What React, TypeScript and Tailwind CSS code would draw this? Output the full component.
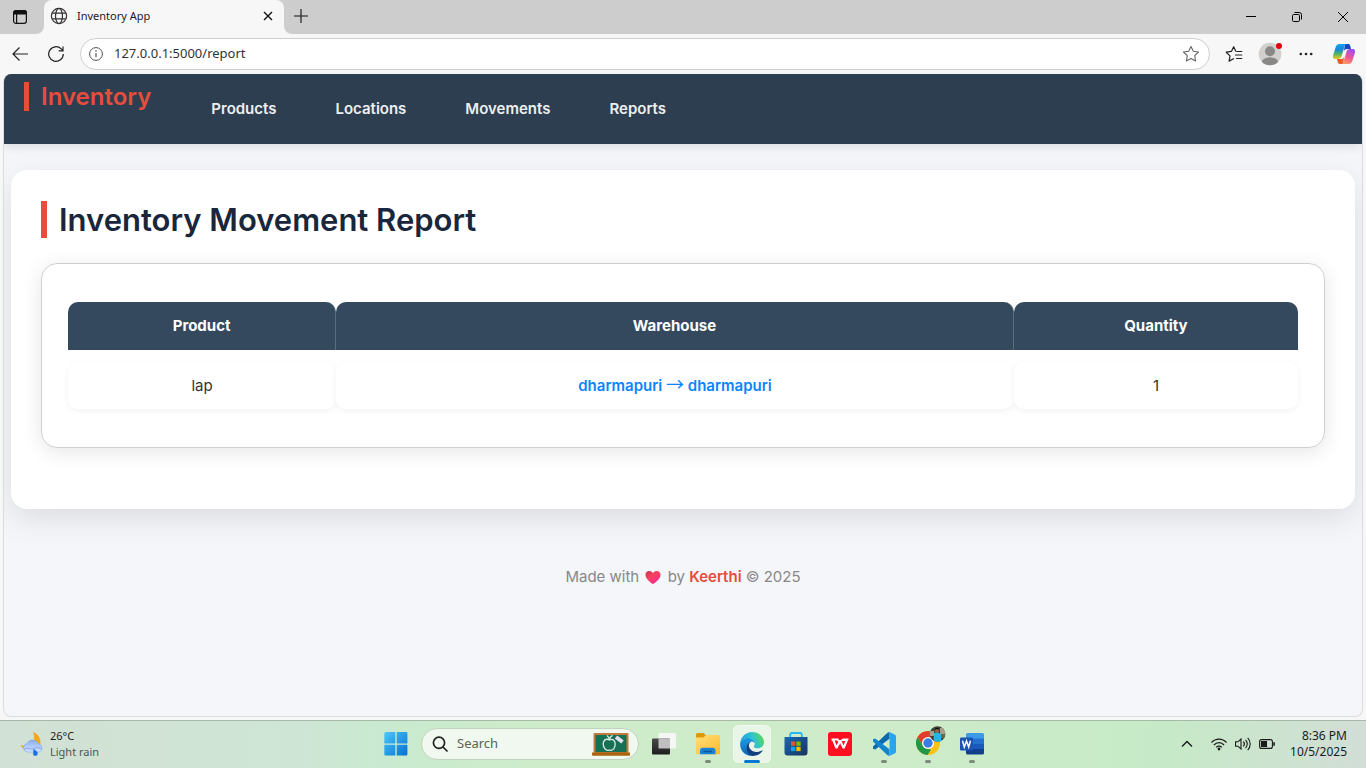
import type { ReactNode } from "react";

const navItems = ["Products", "Locations", "Movements", "Reports"];

const rows = [{ product: "lap", from: "dharmapuri", to: "dharmapuri", quantity: 1 }];

function TabActionsIcon() {
  return (
    <svg width="16" height="16" viewBox="0 0 16 16" fill="none" stroke="#111" strokeWidth="1.2">
      <rect x="1.6" y="1.6" width="12.8" height="12.8" rx="2.4" />
      <path d="M1.8 4.9V3.6a2 2 0 0 1 2-2h8.400a2 2 0 0 1 2 2v1.300z" fill="#111" />
      <path d="M4.600 5v9" />
    </svg>
  );
}

function GlobeIcon() {
  return (
    <svg width="18" height="18" viewBox="0 0 18 18" fill="none" stroke="#333" strokeWidth="1.2">
      <circle cx="9" cy="9" r="7.600" />
      <ellipse cx="9" cy="9" rx="3.500" ry="7.600" />
      <path d="M2.200 6.200h13.600M2.200 11.800h13.600" />
    </svg>
  );
}

function StarIcon({ lines = false }: { lines?: boolean }) {
  return lines ? (
    <svg width="18" height="18" viewBox="0 0 18 18" fill="none" stroke="#222" strokeWidth="1.200" strokeLinejoin="round" strokeLinecap="round">
      <path d="M10.800 6.200 8.700 1.700 6.400 6.400l-5.200.8 3.800 3.700-.9 5.200 4.400-2.400M12 6.500h4.800M10.500 10h6.300M11.500 13.500h5.300" />
    </svg>
  ) : (
    <svg width="18" height="18" viewBox="0 0 18 18" fill="none" stroke="#666" strokeWidth="1.100" strokeLinejoin="round">
      <path d="m9 1.500 2.300 4.800 5.200.7-3.800 3.700.9 5.300L9 13.500 4.400 16l.9-5.300L1.500 7l5.200-.7z" />
    </svg>
  );
}

function CopilotIcon() {
  return (
    <svg width="24" height="22" viewBox="0 0 24 22">
      <defs>
        <linearGradient id="cp-left" x1="0" y1="0" x2="0" y2="1">
          <stop offset="0" stopColor="#16a5e8" />
          <stop offset=".35" stopColor="#1587e4" />
          <stop offset=".65" stopColor="#4db36a" />
          <stop offset="1" stopColor="#f3cb13" />
        </linearGradient>
        <linearGradient id="cp-right" x1=".7" y1="0" x2=".2" y2="1">
          <stop offset="0" stopColor="#9b4df2" />
          <stop offset=".5" stopColor="#ee5797" />
          <stop offset="1" stopColor="#ffa35a" />
        </linearGradient>
      </defs>
      <path d="M13 1h3.200c1 0 1.700.7 2 1.700L19 6h-4c-2 0-2.700 1-3.200 2.600z" fill="#1846bd" />
      <path d="M11 21H7.800c-1 0-1.700-.7-2-1.700L5 16h4c2 0 2.700-1 3.200-2.600z" fill="#ef5a2b" />
      <path d="M7.500 1H15c-1.500 0-2 1-2.400 2.300L9.600 13c-.6 2-1.600 3-3.600 3H3.500C1 16 .6 14 1.200 12l2.500-8C4.400 2 5.500 1 7.500 1z" fill="url(#cp-left)" />
      <path d="M16.500 21H9c1.500 0 2-1 2.400-2.300L14.400 9c.6-2 1.600-3 3.600-3h2.500c2.500 0 2.900 2 2.300 4l-2.500 8c-.7 2-1.800 3-3.800 3z" fill="url(#cp-right)" />
    </svg>
  );
}

function BrowserTabs() {
  return (
    <div className="flex h-[34px] bg-[#f7f7f7]">
      <div className="flex w-11 items-center rounded-br-lg bg-[#cdcdcd] pl-3">
        <button aria-label="Tab actions">
          <TabActionsIcon />
        </button>
      </div>
      <div className="w-60 bg-[#cdcdcd]">
        <div className="flex h-8 items-center rounded-t-lg bg-[#f7f7f7] pr-2 pl-1.5">
          <GlobeIcon />
          <span className="ml-[9px] flex-1 text-[11px] text-[#1b1b1b]">Inventory App</span>
          <button aria-label="Close tab" className="grid size-4 place-items-center">
            <svg width="10" height="10" viewBox="0 0 10 10" stroke="#111" strokeWidth="1.400">
              <path d="m1 1 8 8M9 1 1 9" />
            </svg>
          </button>
        </div>
        <div className="h-0.5 bg-[#f7f7f7]" />
      </div>
      <div className="flex flex-1 items-start justify-between rounded-bl-lg bg-[#cdcdcd]">
        <button aria-label="New tab" className="grid h-8 w-[34px] place-items-center">
          <svg width="14" height="14" viewBox="0 0 14 14" stroke="#111" strokeWidth="1.100">
            <path d="M7 0v14M0 7h14" />
          </svg>
        </button>
        <div className="flex">
          <button aria-label="Minimize" className="grid h-[34px] w-[46px] place-items-center">
            <svg width="10" height="10" viewBox="0 0 10 10" stroke="#000">
              <path d="M0 4.500h10" />
            </svg>
          </button>
          <button aria-label="Restore" className="grid h-[34px] w-[46px] place-items-center">
            <svg width="10" height="10" viewBox="0 0 10 10" fill="none" stroke="#000">
              <rect x=".5" y="2.500" width="7" height="7" rx="1.200" />
              <path d="M2.500.5h4.700a2.300 2.300 0 0 1 2.300 2.300v4.700" />
            </svg>
          </button>
          <button aria-label="Close" className="grid h-[34px] w-[46px] place-items-center">
            <svg width="10" height="10" viewBox="0 0 10 10" stroke="#000">
              <path d="m0 0 10 10M10 0 0 10" />
            </svg>
          </button>
        </div>
      </div>
    </div>
  );
}

function Toolbar() {
  const slot = "grid h-8 w-9 place-items-center";
  return (
    <div className="flex h-10 items-center bg-[#f7f7f7] px-0.5">
      <button aria-label="Back" className={slot}>
        <svg width="16" height="14" viewBox="0 0 16 14" fill="none" stroke="#222" strokeWidth="1.200">
          <path d="M16 7H1M7.500.500 1 7l6.500 6.500" />
        </svg>
      </button>
      <button aria-label="Refresh" className={slot}>
        <svg width="16" height="16" viewBox="0 0 16 16" fill="none" stroke="#222" strokeWidth="1.200">
          <path d="M15.300 8A7.300 7.300 0 1 1 13.200 2.900L15 4.700M15 .5v4.300h-4.300" />
        </svg>
      </button>
      <div className="mr-1.5 ml-1.5 flex h-8 flex-1 items-center rounded-full border border-[#cfcfcf] bg-white px-2">
        <svg width="14" height="14" viewBox="0 0 14 14" fill="none" stroke="#555">
          <circle cx="7" cy="7" r="6.400" />
          <path d="M7 6v4.300" strokeWidth="1.200" />
          <circle cx="7" cy="4" r=".8" fill="#555" stroke="none" />
        </svg>
        <input
          aria-label="Address"
          defaultValue="127.0.0.1:5000/report"
          className="ml-[11px] min-w-0 flex-1 bg-transparent text-[13px] text-[#333] outline-none"
        />
        <button aria-label="Add to favorites" className="mr-px">
          <StarIcon />
        </button>
      </div>
      <button aria-label="Favorites" className={slot}>
        <StarIcon lines />
      </button>
      <button aria-label="Profile" className={slot}>
        <svg width="26" height="26" viewBox="0 0 26 26" className="overflow-visible">
          <defs>
            <clipPath id="avatar">
              <circle cx="13" cy="13" r="11.300" />
            </clipPath>
          </defs>
          <circle cx="13" cy="13" r="11.300" fill="#d2d0ce" />
          <g clipPath="url(#avatar)" fill="#8a8886">
            <circle cx="13" cy="10.200" r="5" />
            <ellipse cx="13" cy="21.800" rx="8.300" ry="5.600" />
          </g>
          <circle cx="22" cy="5" r="3" fill="#e3000f" />
        </svg>
      </button>
      <button aria-label="Settings and more" className={slot}>
        <svg width="14" height="4" viewBox="0 0 14 4" fill="#222">
          <circle cx="1.800" cy="2" r="1.300" />
          <circle cx="7" cy="2" r="1.300" />
          <circle cx="12.200" cy="2" r="1.300" />
        </svg>
      </button>
      <button aria-label="Copilot" className="grid h-8 w-10 place-items-center">
        <CopilotIcon />
      </button>
    </div>
  );
}

function HeartIcon() {
  return (
    <svg role="img" aria-label="love" width="16" height="16" viewBox="0 0 16 16" className="mx-0.5 inline-block">
      <defs>
        <linearGradient id="heart" x1="0" y1="0" x2=".7" y2="1">
          <stop offset="0" stopColor="#c52b55" />
          <stop offset=".4" stopColor="#f5425a" />
          <stop offset="1" stopColor="#ff2a96" />
        </linearGradient>
      </defs>
      <path d="M8 14.300C5 12 .5 9 .5 4.800.5 2.500 2.200 1 4.200 1 5.900 1 7.200 1.800 8 3.200 8.800 1.800 10.100 1 11.800 1c2 0 3.700 1.500 3.700 3.800 0 4.200-4.500 7.200-7.500 9.500z" fill="url(#heart)" />
    </svg>
  );
}

function ReportPage() {
  return (
    <main className="mx-[3px] mb-[3px] flex-1 overflow-hidden rounded-lg border border-t-0 border-[#dcdcdc] bg-[#f4f6fa] font-['Inter',sans-serif]">
      <header className="relative flex h-[70px] items-start bg-[#2c3e50] px-5 pt-2 shadow-[0_2px_10px_rgba(0,0,0,0.12)]">
        <a href="#home" className="border-l-[5px] border-[#e74c3c] pl-3 text-2xl leading-[29px] font-semibold text-[#e74c3c]">
          Inventory
        </a>
        <nav className="ml-[60px] flex h-[54px] gap-[59px]">
          {navItems.map((item) => (
            <a key={item} href={`#${item.toLowerCase()}`} className="pt-[18px] text-[15px] leading-[18px] font-semibold text-[#ecf0f1]">
              {item}
            </a>
          ))}
        </nav>
      </header>

      <section className="mx-[7px] mt-[26px] rounded-2xl bg-white px-[30px] pt-[31px] pb-[61px] shadow-[0_10px_30px_rgba(0,0,0,0.1)]">
        <h1 className="border-l-[6px] border-[#e74c3c] pl-3 text-[31px] leading-[37px] font-semibold text-[#1a263b]">
          Inventory Movement Report
        </h1>
        <div className="mt-[25px] rounded-2xl border border-[#cfcfcf] px-[26px] py-[38px] shadow-[0_4px_20px_rgba(0,0,0,0.1)]">
          <table className="w-full table-fixed border-separate border-spacing-0 text-center text-[15px] leading-6">
            <colgroup>
              <col className="w-[21.8%]" />
              <col className="w-[55.1%]" />
              <col className="w-[23.1%]" />
            </colgroup>
            <thead className="text-white">
              <tr>
                <th scope="col" className="h-12 rounded-t-[10px] border-r border-[#5a6c7d] bg-[#34495e] font-bold">Product</th>
                <th scope="col" className="h-12 rounded-t-[10px] border-r border-[#5a6c7d] bg-[#34495e] font-bold">Warehouse</th>
                <th scope="col" className="h-12 rounded-t-[10px] bg-[#34495e] font-bold">Quantity</th>
              </tr>
            </thead>
            <tbody className="before:block before:h-3 before:content-['']">
              {rows.map((row) => (
                <tr key={row.product} className="text-[#333]">
                  <td className="h-[47px] rounded-[10px] bg-white shadow-[0_2px_6px_rgba(0,0,0,0.05)]">{row.product}</td>
                  <td className="h-[47px] rounded-[10px] bg-white font-semibold text-[#0a84ff] shadow-[0_2px_6px_rgba(0,0,0,0.05)]">
                    {row.from} <span className="font-['Noto_Sans_CJK_SC',sans-serif] text-lg leading-none font-normal">→</span> {row.to}
                  </td>
                  <td className="h-[47px] rounded-[10px] bg-white shadow-[0_2px_6px_rgba(0,0,0,0.05)]">{row.quantity}</td>
                </tr>
              ))}
            </tbody>
          </table>
        </div>
      </section>

      <footer className="mt-14 text-center text-[15px] leading-6 text-[#888]">
        Made with <HeartIcon /> by <span className="font-semibold text-[#e74c3c]">Keerthi</span> © 2025
      </footer>
    </main>
  );
}

function WeatherIcon() {
  return (
    <svg width="24" height="26" viewBox="0 0 24 26">
      <defs>
        <linearGradient id="cloud" x1="0" y1="0" x2="0" y2="1">
          <stop offset="0" stopColor="#86aef3" />
          <stop offset="1" stopColor="#d7e3fb" />
        </linearGradient>
      </defs>
      <path d="M13 1c5 1.500 8 6.500 7.500 12H13c1.500-4 1.500-8 0-12zM.500 14c3 1 6 .8 8-.5L4.500 18C2.800 17.300 1.300 16 .500 14z" fill="#f4a623" />
      <path d="M7.500 21a4.300 4.300 0 0 1-.5-8.500 6.300 6.300 0 0 1 11.500.300 4.200 4.200 0 0 1 .500 8.200z" fill="url(#cloud)" stroke="#7fa5e8" strokeWidth=".6" />
      <path d="M4 18.500c3-2.500 7 .5 10-1 3-1.500 6-.5 8 .5" fill="none" stroke="#84a8ec" />
      <path d="M13.500 18c2.500 1.500 5 3 4 5.500-.8 1.800-3.800 1.700-4.300-.300z" fill="#1670ed" />
    </svg>
  );
}

function ChalkboardIcon() {
  return (
    <svg width="38" height="24" viewBox="0 0 38 24">
      <rect x="1.500" y="1" width="35" height="20" rx="1" fill="#c17a3c" />
      <rect x="3.500" y="3" width="31" height="17" fill="#177055" />
      <path d="M0 20.500h38v2.200a1 1 0 0 1-1 1H1a1 1 0 0 1-1-1z" fill="#a9640d" />
      <path d="M17.500 8c-3.500-2-6.500.3-6.300 4.200.2 3.500 2.600 6.300 4.600 6.100 1-.3 2-.3 3.200 0 2.500 0 4.300-3.300 4.200-6.500-.3-4-3-5.300-5.700-3.800zc-.2-2-1-3.300-2.500-4.500M18 6.800c0-2 1-3 2.700-3.200" fill="none" stroke="#dcebe2" strokeWidth="1.300" />
      <path d="m24 5 6.500 5" stroke="#e5dff0" strokeWidth="4" />
    </svg>
  );
}

function StartIcon() {
  return (
    <svg width="24" height="24" viewBox="0 0 24 24">
      <defs>
        <linearGradient id="start" gradientUnits="userSpaceOnUse" x1="0" y1="0" x2="24" y2="24">
          <stop stopColor="#4cc9fa" />
          <stop offset="1" stopColor="#036ed0" />
        </linearGradient>
      </defs>
      <path d="M1.500 0H11.300v11.500H.300V1.200zM12.700 0h9.500a1.200 1.200 0 0 1 1.200 1.200v10.300H12.700zM.300 12.700h11V23.500H1.500a1.200 1.200 0 0 1-1.200-1.200zM12.700 12.700h10.700v9.600a1.200 1.200 0 0 1-1.200 1.200h-9.500z" fill="url(#start)" />
    </svg>
  );
}

function TaskViewIcon() {
  return (
    <svg width="24" height="24" viewBox="0 0 24 24">
      <defs>
        <linearGradient id="tv-dark" x1="0" y1="0" x2="0" y2="1">
          <stop stopColor="#4a4a4a" />
          <stop offset="1" stopColor="#1d1d1d" />
        </linearGradient>
      </defs>
      <rect x="6.500" y="1" width="17.500" height="15.500" rx="1" fill="#f6f6f6" />
      <rect x="0" y="6.500" width="18" height="16" rx="1" fill="url(#tv-dark)" />
      <path d="M6.500 6.500H18v10H6.500z" fill="#bfbfbf" />
    </svg>
  );
}

function ExplorerIcon() {
  return (
    <svg width="24" height="24" viewBox="0 0 24 24">
      <defs>
        <linearGradient id="folder" x1="0" y1="0" x2="1" y2="1">
          <stop stopColor="#ffe07a" />
          <stop offset="1" stopColor="#fcb92b" />
        </linearGradient>
      </defs>
      <path d="M0 2.500A1.500 1.500 0 0 1 1.500 1h6.300L10 3.500h12A1.500 1.500 0 0 1 23.500 5v5H0z" fill="#dd9a0d" />
      <path d="M0 5.500h7.500L10 3h12.500A1.500 1.500 0 0 1 24 4.500v16.300a1.500 1.500 0 0 1-1.500 1.500h-21A1.500 1.500 0 0 1 0 20.800z" fill="url(#folder)" />
      <path d="M4 22.300v-3.500A3 3 0 0 1 7 15.800h9.500a3 3 0 0 1 3 3v3.500z" fill="#1783d5" />
      <path d="M7.500 19.500h8.500" stroke="#0a559f" strokeWidth="1.500" />
    </svg>
  );
}

function EdgeIcon() {
  return (
    <svg width="24" height="24" viewBox="0 0 24 24">
      <defs>
        <linearGradient id="edge-top" x1="0" y1=".6" x2="1" y2=".3">
          <stop stopColor="#1b9de2" />
          <stop offset=".55" stopColor="#2cc3d2" />
          <stop offset="1" stopColor="#5fd951" />
        </linearGradient>
        <linearGradient id="edge-left" x1="0" y1="0" x2="0" y2="1">
          <stop stopColor="#1b9de2" />
          <stop offset="1" stopColor="#1161b5" />
        </linearGradient>
      </defs>
      <path d="M.2 11C.8 5 5.600 0 12 0c7 0 12 5 12 10.200 0 3.800-3 6-6 6-2.500 0-4.200-.8-4.200-1.800 0-.6 1-1.100 1-2.900C14.800 8.300 11.500 6 8 6 4 6 1 8.300.2 11z" fill="url(#edge-top)" />
      <path d="M.1 12C.3 8.300 3.500 6 8 6c3.800 0 6.700 2.500 6.800 5.200-1-1.200-2.200-1.700-3.300-1.700-2.800 1-4 3.600-4 6.200 0 4 3 7 6.500 8C6 24.900 0 19 .1 12z" fill="url(#edge-left)" />
      <path d="M11.500 9.500c-2 .8-2.800 2.500-2.600 4.500.4 3.500 4.300 6.300 8.300 5.900 2.200-.2 3.700-1 4.700-1.500.6-.3.900.1.600.7A12 12 0 0 1 13 24c-4-.8-6.700-4.500-6.300-8.500.2-3 2-5.500 4.800-6z" fill="#123f7d" />
    </svg>
  );
}

function StoreIcon() {
  return (
    <svg width="24" height="24" viewBox="0 0 24 24">
      <defs>
        <linearGradient id="store" x1="0" y1="0" x2="1" y2="1">
          <stop stopColor="#1769b5" />
          <stop offset="1" stopColor="#18325d" />
        </linearGradient>
      </defs>
      <path d="M6.200 7V2.500a1.500 1.500 0 0 1 1.500-1.500h8.600a1.500 1.500 0 0 1 1.500 1.500V7" fill="none" stroke="#28b6ee" strokeWidth="1.800" />
      <path d="M.5 5h23v15.500a3 3 0 0 1-3 3h-17a3 3 0 0 1-3-3z" fill="url(#store)" />
      <path d="M7 9.500h4.300v4.300H7z" fill="#f25022" />
      <path d="M12.300 9.500h4.300v4.300h-4.300z" fill="#7fba00" />
      <path d="M7 14.800h4.300v4.300H7z" fill="#00a4ef" />
      <path d="M12.300 14.800h4.300v4.300h-4.300z" fill="#ffb900" />
    </svg>
  );
}

function WpsIcon() {
  return (
    <svg width="24" height="24" viewBox="0 0 24 24">
      <rect width="24" height="24" rx="3" fill="#fc0f20" />
      <path d="M3.500 7.500h7M5 7.500 8.500 16l3.600-7.500L15.600 16 19 8h-5.500" fill="none" stroke="#fff" strokeWidth="2.100" strokeLinejoin="bevel" />
      <path d="m9.500 7 2.500 5.500M14.500 7.200h6" stroke="#fff" strokeWidth="1.400" />
    </svg>
  );
}

function VsCodeIcon() {
  return (
    <svg width="24" height="24" viewBox="0 0 24 24">
      <path d="M17.500 0v6.700L3.200 17.500l-2.200-.8v-2.200L15.500.8z" fill="#0b69ae" />
      <path d="M17.500 24v-6.700L3.200 6.500 1 7.300v2.200l14.500 13.700z" fill="#1184cc" />
      <path d="m17.500 0 5.500 2.700a1.800 1.800 0 0 1 1 1.500v15.600a1.800 1.800 0 0 1-1 1.500L17.500 24z" fill="#29a5ef" />
    </svg>
  );
}

function ChromeIcon() {
  return (
    <svg width="30" height="30" viewBox="0 0 30 30">
      <defs>
        <clipPath id="chrome-avatar">
          <circle cx="21.500" cy="8" r="7.800" />
        </clipPath>
      </defs>
      <circle cx="12" cy="17" r="12" fill="#fbc116" />
      <path d="M1.600 11A12 12 0 0 1 22.400 11H12l-4.800 9z" fill="#e33b2e" />
      <path d="M1.600 11l5.600 9.200L12 23l3 .500L11.600 29A12 12 0 0 1 1.600 11z" fill="#22974a" />
      <circle cx="12" cy="17" r="6" fill="#fff" />
      <circle cx="12" cy="17" r="4.700" fill="#3b7de8" />
      <g clipPath="url(#chrome-avatar)">
        <path d="M13 0h17v16H13z" fill="#453f39" />
        <path d="M13 5h5v5h-5zM24 2h6v6h-6z" fill="#a5a18d" />
        <path d="M24 8h6v4h-6z" fill="#5e7045" />
        <path d="m18 7 3-1 4 2 .500 8h-8z" fill="#25b4e5" />
        <circle cx="21" cy="4.500" r="2.300" fill="#9a6248" />
        <path d="M18.700 4c0-3 4.600-3 4.600 0l-2-1z" fill="#111" />
      </g>
    </svg>
  );
}

function WordIcon() {
  return (
    <svg width="24" height="24" viewBox="0 0 24 24">
      <path d="M7.500 1h15A1.500 1.500 0 0 1 24 2.500V7H6V2.500A1.500 1.500 0 0 1 7.500 1z" fill="#3d9ae8" />
      <path d="M6 6.500h18V12H6z" fill="#2472ce" />
      <path d="M6 12h18v5.500H6z" fill="#185abd" />
      <path d="M6 17h18v4a1.500 1.500 0 0 1-1.500 1.500h-15A1.500 1.500 0 0 1 6 21z" fill="#123f8c" />
      <rect x="0" y="5.500" width="13" height="13" rx="1.200" fill="#1b54b5" />
      <path d="m2.500 8.800 1.800 6.200 2.200-6 2.200 6 1.800-6.200" fill="none" stroke="#fff" strokeWidth="1.500" />
    </svg>
  );
}

function TaskButton({ label, running = false, active = false, children }: { label: string; running?: boolean; active?: boolean; children: ReactNode }) {
  return (
    <button aria-label={label} className="relative grid h-12 w-11 place-items-center">
      {active && <span className="absolute inset-x-[3px] top-[5px] bottom-[5px] rounded-md border border-white/40 bg-white/55" />}
      <span className="relative">{children}</span>
      {active && <span className="absolute bottom-[5px] left-3.5 h-[3px] w-4 rounded-full bg-[#0078d4]" />}
      {running && <span className="absolute bottom-[5px] left-[19px] h-[3px] w-1.5 rounded-full bg-[#7c8b7a]" />}
    </button>
  );
}

function Taskbar() {
  return (
    <div className="grid h-12 grid-cols-[1fr_auto_1fr] items-center bg-[linear-gradient(90deg,#d2e1d5_0%,#cee5d5_22%,#c9ead0_28%,#ceecc9_40%,#ceecc9_65%,#c6eac7_85%,#d2ded6_100%)] text-xs text-[#1b1b1b] shadow-[inset_0_1px_0_#a8b9aa]">
      <button className="flex items-center gap-1.5 pl-5 text-left">
        <WeatherIcon />
        <span className="text-[11px] leading-4">
          <span className="block">26°C</span>
          <span className="block text-[#4c574f]">Light rain</span>
        </span>
      </button>
      <div className="flex items-center pl-0.5">
        <TaskButton label="Start"><StartIcon /></TaskButton>
        <label className="mx-[3px] flex h-8 w-[218px] items-center rounded-full border border-[#bfd3bf] bg-[#f0f8f0] pr-2 pl-2.5">
          <svg width="16" height="16" viewBox="0 0 16 16" fill="none" stroke="#222" strokeWidth="1.700" strokeLinecap="round">
            <circle cx="7" cy="6.800" r="5.600" />
            <path d="m11 11 4 4" />
          </svg>
          <input aria-label="Search" placeholder="Search" className="ml-[9px] min-w-0 flex-1 bg-transparent text-[13px] outline-none placeholder:text-[#5a5f5a]" />
          <ChalkboardIcon />
        </label>
        <TaskButton label="Task view"><TaskViewIcon /></TaskButton>
        <TaskButton label="File Explorer" running><ExplorerIcon /></TaskButton>
        <TaskButton label="Microsoft Edge" active><EdgeIcon /></TaskButton>
        <TaskButton label="Microsoft Store"><StoreIcon /></TaskButton>
        <TaskButton label="WPS Office"><WpsIcon /></TaskButton>
        <TaskButton label="Visual Studio Code" running><VsCodeIcon /></TaskButton>
        <TaskButton label="Google Chrome" running>
          <span className="flex size-6 items-end">
            <span className="w-[30px] shrink-0"><ChromeIcon /></span>
          </span>
        </TaskButton>
        <TaskButton label="Word" running><WordIcon /></TaskButton>
      </div>
      <div className="flex items-center justify-end pr-[19px]">
        <button aria-label="Show hidden icons" className="mr-[18px]">
          <svg width="12" height="8" viewBox="0 0 12 8" fill="none" stroke="#1b1b1b" strokeWidth="1.400">
            <path d="m1 6.500 5-5 5 5" />
          </svg>
        </button>
        <button aria-label="Network, volume and battery" className="mr-[15px] flex items-center gap-2">
          <svg width="16" height="14" viewBox="0 0 16 14" fill="none" stroke="#1b1b1b" strokeWidth="1.200">
            <path d="M.5 5.500c4.200-4.600 10.800-4.600 15 0M2.900 8c2.900-3.200 7.300-3.200 10.200 0M5.200 10.300c1.600-1.700 4-1.700 5.600 0" />
            <circle cx="8" cy="12" r="1.400" fill="#1b1b1b" stroke="none" />
          </svg>
          <svg width="16" height="14" viewBox="0 0 16 14" fill="none" stroke="#1b1b1b" strokeWidth="1.100">
            <path d="M.6 4.800h2.300L6 2v10L2.900 9.200H.6zM8.300 4.700a3.300 3.300 0 0 1 0 4.600M10.500 2.800a6 6 0 0 1 0 8.400M12.700.9a8.700 8.700 0 0 1 0 12.200" />
          </svg>
          <svg width="16" height="10" viewBox="0 0 16 10" fill="none" stroke="#1b1b1b" strokeWidth="1.100">
            <rect x=".6" y=".6" width="12.800" height="8.800" rx="2" />
            <path d="M2.500 2.500h5v5h-5z" fill="#1b1b1b" />
            <path d="M15 3.300v3.400" strokeWidth="1.600" />
          </svg>
        </button>
        <button className="text-right text-xs leading-4">
          <span className="block">8:36 PM</span>
          <span className="block">10/5/2025</span>
        </button>
      </div>
    </div>
  );
}

export default function App() {
  return (
    <div className="flex min-h-screen flex-col bg-[#f7f7f7] font-['Noto_Sans',sans-serif]">
      <BrowserTabs />
      <Toolbar />
      <ReportPage />
      <Taskbar />
    </div>
  );
}
